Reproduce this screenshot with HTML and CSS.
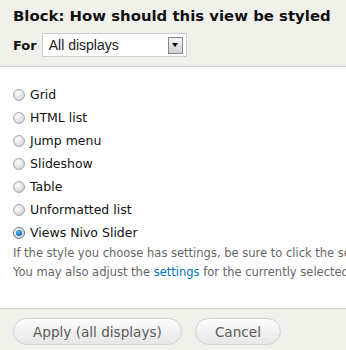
FILE: index.html
```html
<!DOCTYPE html>
<html>
<head>
    <meta charset="utf-8">
    <title>Views style</title>
    <link rel="stylesheet" href="styles.css">
</head>
<body>
    <div class="dialog">
        <div class="dialog-head">
            <h1 class="title">Block: How should this view be styled</h1>
            <div class="for-row">
                <span class="for-label">For</span>
                <div class="select">
                    <span class="select-value">All displays</span>
                    <span class="select-button"><span class="arrow"></span></span>
                </div>
            </div>
        </div>

        <div class="dialog-body">
            <ul class="options">
                <li><span class="radio"></span>Grid</li>
                <li><span class="radio"></span>HTML list</li>
                <li><span class="radio"></span>Jump menu</li>
                <li><span class="radio"></span>Slideshow</li>
                <li><span class="radio"></span>Table</li>
                <li><span class="radio"></span>Unformatted list</li>
                <li><span class="radio checked"></span>Views Nivo Slider</li>
            </ul>
            <div class="description">
                <p>If the style you choose has settings, be sure to click the settings button that will appear next.</p>
                <p>You may also adjust the <a href="#">settings</a> for the currently selected style.</p>
            </div>
        </div>

        <div class="dialog-foot">
            <span class="button">Apply (all displays)</span>
            <span class="button">Cancel</span>
        </div>
    </div>
</body>
</html>
```

FILE: styles.css
```css
body {
    margin: 0;
    background: #fff;
    font-family: "DejaVu Sans", Verdana, sans-serif;
    color: #111;
}

.dialog {
    width: 346px;
    height: 350px;
    display: flex;
    flex-direction: column;
    overflow: hidden;
}

.dialog-head {
    background: #f1f1ec;
    border-bottom: 1px solid #ccc;
    padding: 6px 0 0 13px;
    height: 67px;
    box-sizing: border-box;
    flex: none;
}

.title {
    margin: 0;
    font-size: 14.9px;
    line-height: 20px;
    font-weight: bold;
    white-space: nowrap;
}

.for-row {
    display: flex;
    align-items: center;
    gap: 5px;
    margin-top: 7px;
}

.for-label {
    font-weight: bold;
    font-size: 13px;
}

.select {
    width: 145px;
    height: 24px;
    background: #fff;
    border: 1px solid #ccc;
    display: flex;
    align-items: center;
    justify-content: space-between;
    box-sizing: border-box;
    padding: 0 3px 0 6px;
}

.select-value {
    font-family: "Liberation Sans", Arial, sans-serif;
    font-size: 14px;
    color: #222;
}

.select-button {
    width: 13px;
    height: 15px;
    border: 1px solid #888;
    background: linear-gradient(#f4f4f4, #d0d0d0);
    display: flex;
    align-items: center;
    justify-content: center;
}

.arrow {
    width: 0;
    height: 0;
    border-left: 3px solid transparent;
    border-right: 3px solid transparent;
    border-top: 4px solid #000;
}

.dialog-body {
    height: 242px;
    flex: none;
    border-bottom: 1px solid #ccc;
    padding: 16px 0 0 13px;
    box-sizing: border-box;
    white-space: nowrap;
}

.options {
    list-style: none;
    margin: 0;
    padding: 0;
}

.options li {
    display: flex;
    align-items: center;
    height: 23px;
    font-size: 12.5px;
}

.radio {
    width: 12px;
    height: 12px;
    border-radius: 50%;
    border: 1px solid #a8a8a8;
    background: radial-gradient(circle at 40% 35%, #fff 0, #e6e6e6 45%, #c4c4c4 100%);
    margin-right: 5px;
    box-sizing: border-box;
    display: flex;
    align-items: center;
    justify-content: center;
}

.radio.checked {
    border-color: #5f7ea0;
}

.radio.checked::after {
    content: "";
    width: 6px;
    height: 6px;
    border-radius: 50%;
    background: radial-gradient(circle at 40% 35%, #4fb6f0, #004a8c);
}

.description {
    margin-top: 0;
    font-size: 11.5px;
    color: #666;
}

.description p {
    margin: 0;
    line-height: 19px;
}

.description a {
    color: #0074bd;
    text-decoration: none;
}

.dialog-foot {
    background: #f1f1ec;
    flex: 1;
    display: flex;
    align-items: flex-start;
    gap: 13px;
    padding: 9px 0 0 13px;
}

.button {
    font-size: 13.6px;
    color: #5a5a5a;
    border: 1px solid #d2d2d2;
    border-radius: 14px;
    background: linear-gradient(#fdfdfd, #e6e6e6);
    height: 27px;
    box-sizing: border-box;
    padding: 0 19px;
    display: flex;
    align-items: center;
}
```
